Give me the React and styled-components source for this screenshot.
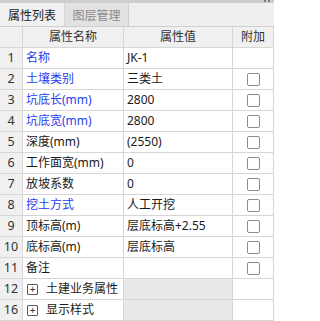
import React from 'react';
import styled, { createGlobalStyle } from 'styled-components';

const GlobalStyle = createGlobalStyle`
  html, body {
    margin: 0;
    padding: 0;
    background: #ffffff;
  }
  body {
    font-family: "Noto Sans", "Noto Sans CJK SC", sans-serif;
    font-size: 12px;
  }
`;

const Panel = styled.div`
  width: 274px;
  height: 321px;
  overflow: hidden;
  background: #ffffff;
  display: flex;
  flex-direction: column;
`;

const TopStrip = styled.div`
  height: 3px;
  background: #cdcdd2;
  display: flex;
  justify-content: flex-end;
  align-items: flex-start;
  gap: 2px;
  padding-right: 4px;
`;

const Dot = styled.span`
  width: 2px;
  height: 2px;
  background: #7a7a80;
`;

const TabBar = styled.div`
  height: 23px;
  background: #efefef;
  border-bottom: 1px solid #cfcfcf;
  display: flex;
`;

const Tab = styled.div`
  width: ${p => (p.$active ? '65px' : '64px')};
  display: flex;
  align-items: center;
  justify-content: center;
  font-size: 12px;
  color: ${p => (p.$active ? '#222' : '#8a8a8a')};
  background: ${p => (p.$active ? '#f0f0f0' : '#e2e2e2')};
  border-right: 1px solid ${p => (p.$active ? '#d6d6d6' : '#cfcfcf')};
  box-sizing: border-box;
`;

const Table = styled.div`
  display: grid;
  grid-template-columns: 23px 101px 109px 41px;
  grid-auto-rows: 21px;
`;

const Cell = styled.div`
  box-sizing: border-box;
  border-right: 1px solid #d6d6d6;
  border-bottom: 1px solid #d6d6d6;
  display: flex;
  align-items: center;
  justify-content: ${p => (p.$center ? 'center' : 'flex-start')};
  padding-left: ${p => (p.$center ? '0' : '3px')};
  background: ${p => p.$bg || '#ffffff'};
  color: ${p => (p.$blue ? '#1f3ff0' : '#1a1a1a')};
  white-space: nowrap;
  overflow: hidden;
  line-height: 1;
`;

const HeadCell = styled(Cell)`
  background: #f0f0f0;
  color: #333;
  justify-content: center;
  padding-left: 0;
`;

const NumCell = styled(Cell)`
  background: #f0f0f0;
  color: #333;
  justify-content: center;
  padding-left: 0;
  font-size: 12.5px;
`;

const Check = styled.span`
  width: 11px;
  height: 11px;
  border: 1px solid #8c8c8c;
  border-radius: 2px;
  background: #fff;
`;

const Expander = styled.span`
  width: 9px;
  height: 9px;
  border: 1px solid #5a5a5a;
  border-radius: 1px;
  margin-right: 8px;
  margin-left: 1px;
  display: flex;
  align-items: center;
  justify-content: center;
  font-size: 10px;
  line-height: 1;
  color: #333;
`;

const rows = [
  { n: 1, name: '名称', value: 'JK-1', blue: true, check: false },
  { n: 2, name: '土壤类别', value: '三类土', blue: true, check: true },
  { n: 3, name: '坑底长(mm)', value: '2800', blue: true, check: true },
  { n: 4, name: '坑底宽(mm)', value: '2800', blue: true, check: true },
  { n: 5, name: '深度(mm)', value: '(2550)', check: true },
  { n: 6, name: '工作面宽(mm)', value: '0', check: true },
  { n: 7, name: '放坡系数', value: '0', check: true },
  { n: 8, name: '挖土方式', value: '人工开挖', blue: true, check: true },
  { n: 9, name: '顶标高(m)', value: '层底标高+2.55', check: true },
  { n: 10, name: '底标高(m)', value: '层底标高', check: true },
  { n: 11, name: '备注', value: '', check: true },
];

const groups = [
  { n: 12, name: '土建业务属性' },
  { n: 16, name: '显示样式' },
];

export default function App() {
  return (
    <>
      <GlobalStyle />
      <Panel>
        <TopStrip>
          <Dot />
          <Dot />
        </TopStrip>
        <TabBar>
          <Tab $active>属性列表</Tab>
          <Tab>图层管理</Tab>
        </TabBar>
        <Table>
          <HeadCell />
          <HeadCell>属性名称</HeadCell>
          <HeadCell>属性值</HeadCell>
          <HeadCell>附加</HeadCell>
          {rows.map(r => (
            <React.Fragment key={r.n}>
              <NumCell>{r.n}</NumCell>
              <Cell $blue={r.blue}>{r.name}</Cell>
              <Cell>{r.value}</Cell>
              <Cell $center>{r.check && <Check />}</Cell>
            </React.Fragment>
          ))}
          {groups.map(g => (
            <React.Fragment key={g.n}>
              <NumCell>{g.n}</NumCell>
              <Cell>
                <Expander>+</Expander>
                {g.name}
              </Cell>
              <Cell $bg="#e9e9e9" />
              <Cell />
            </React.Fragment>
          ))}
        </Table>
      </Panel>
    </>
  );
}
